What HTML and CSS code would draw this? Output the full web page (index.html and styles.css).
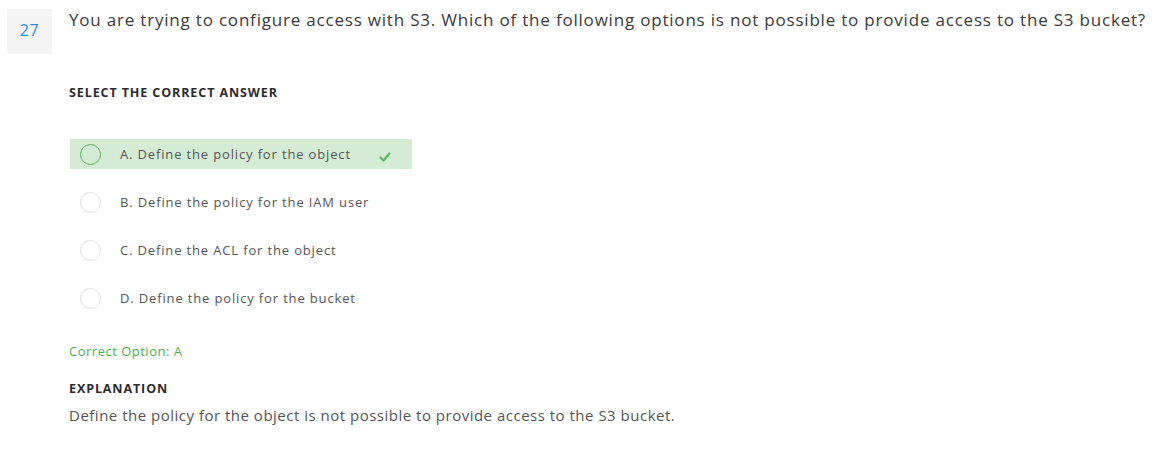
FILE: index.html
```html
<!DOCTYPE html>
<html>
<head>
<meta charset="utf-8">
<link rel="stylesheet" href="styles.css">
</head>
<body>
<div class="question">
  <div class="num">27</div>
  <div class="content">
    <div class="qtext">You are trying to configure access with S3. Which of the following options is not possible to provide access to the S3 bucket?</div>
    <div class="label select">SELECT THE CORRECT ANSWER</div>
    <ul class="options">
      <li class="opt correct"><span class="radio"></span><span class="otext">A. Define the policy for the object</span>
        <svg class="check" width="12" height="10" viewBox="0 0 12 10"><path d="M1.5 5.5 L4.5 8.5 L10.5 1.5" fill="none" stroke="#5cb85c" stroke-width="2.2" stroke-linecap="round" stroke-linejoin="round"/></svg>
      </li>
      <li class="opt"><span class="radio"></span><span class="otext">B. Define the policy for the IAM user</span></li>
      <li class="opt"><span class="radio"></span><span class="otext">C. Define the ACL for the object</span></li>
      <li class="opt"><span class="radio"></span><span class="otext">D. Define the policy for the bucket</span></li>
    </ul>
    <div class="answer">Correct Option: A</div>
    <div class="label explain">EXPLANATION</div>
    <div class="etext">Define the policy for the object is not possible to provide access to the S3 bucket.</div>
  </div>
</div>
</body>
</html>
```

FILE: styles.css
```css
* { box-sizing: border-box; }
body {
  margin: 0;
  background: #fff;
  font-family: "Open Sans", "Noto Sans", sans-serif;
  color: #333;
}
.question {
  display: flex;
  padding: 9px 0 0 7px;
}
.num {
  width: 45px;
  height: 45px;
  flex: none;
  background: #f4f4f4;
  color: #2b8ee6;
  font-size: 16px;
  letter-spacing: 0.5px;
  display: flex;
  align-items: center;
  justify-content: center;
  padding-bottom: 3px;
}
.content {
  margin-left: 17px;
  flex: 1;
}
.qtext {
  font-size: 17px;
  letter-spacing: 0.8px;
  line-height: 22px;
  margin-top: 0;
  color: #3a3a3a;
  white-space: nowrap;
}
.label {
  font-size: 12.5px;
  letter-spacing: 0.9px;
  font-weight: 700;
  color: #2c2c2c;
}
.select {
  margin-top: 53px;
}
.options {
  list-style: none;
  margin: 38px 0 0 0;
  padding: 0;
}
.opt {
  display: flex;
  align-items: center;
  width: 342px;
  height: 30px;
  margin-left: 1px;
  margin-bottom: 18px;
  padding-left: 10px;
  font-size: 13px;
  letter-spacing: 0.85px;
  color: #555;
}
.opt.correct {
  background: #d4ecd4;
}
.radio {
  width: 21px;
  height: 21px;
  border-radius: 50%;
  border: 1px solid #dedede;
  background: #fff;
  flex: none;
}
.correct .radio {
  border-color: #5cb85c;
  background: transparent;
}
.otext {
  margin-left: 19px;
}
.check {
  margin-left: 28px;
  margin-top: 5px;
}
.answer {
  margin-top: 29px;
  font-size: 13px;
  letter-spacing: 0.5px;
  color: #4cae4c;
}
.explain {
  margin-top: 20px;
}
.etext {
  margin-top: 8px;
  font-size: 15px;
  letter-spacing: 0.5px;
  color: #555;
}
```
